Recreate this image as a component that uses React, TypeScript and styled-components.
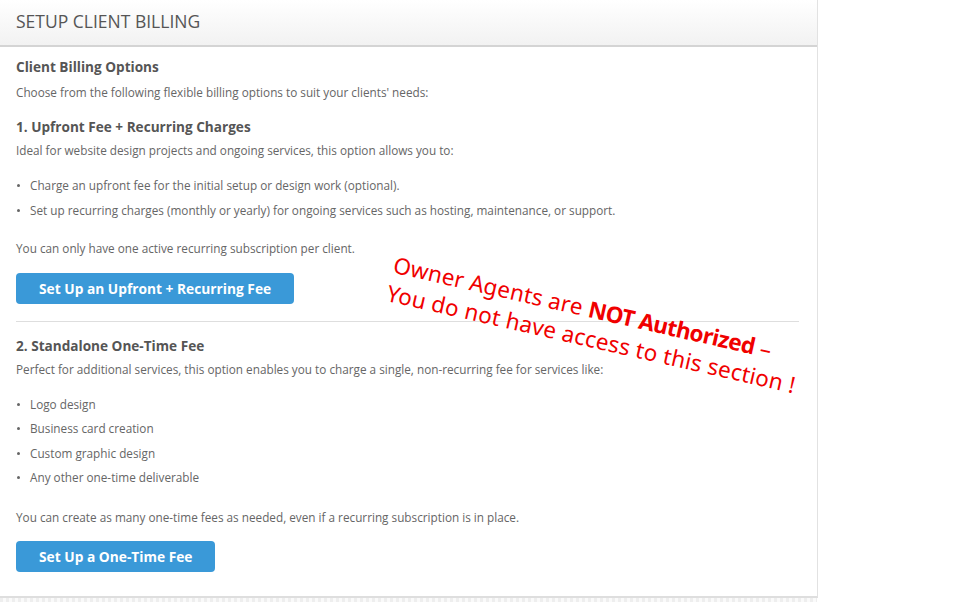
import styled, { createGlobalStyle } from 'styled-components';

const GlobalStyle = createGlobalStyle`
  html, body {
    margin: 0;
    padding: 0;
    background: #ffffff;
  }
  body {
    font-family: 'Open Sans', 'Liberation Sans', sans-serif;
    color: #666;
  }
`;

const Page = styled.div`
  position: relative;
  width: 960px;
  height: 604px;
  overflow: hidden;
`;

const Panel = styled.section`
  width: 817px;
  border-right: 1px solid #e2e2e2;
  border-bottom: 2px solid #dedede;
  background: #fff;
`;

const PanelHeader = styled.header`
  height: 47px;
  display: flex;
  align-items: center;
  padding: 0 16px 4px 16px;
  background: linear-gradient(to bottom, #ffffff 0%, #f2f2f2 100%);
  border-bottom: 2px solid #d4d4d4;
  box-sizing: border-box;
`;

const PanelTitle = styled.h1`
  margin: 0;
  font-size: 17.5px;
  font-weight: 400;
  color: #555;
`;

const PanelBody = styled.div`
  padding: 10px 16px 24px 16px;
`;

const Heading = styled.h2<{ $top?: number }>`
  margin: ${({ $top }) => $top ?? 0}px 0 0 0;
  font-size: 13.6px;
  font-weight: 700;
  color: #555;
  line-height: 20px;
`;

const Text = styled.p<{ $top?: number }>`
  margin: ${({ $top }) => $top ?? 4}px 0 0 0;
  font-size: 11.75px;
  line-height: 18px;
  color: #666;
`;

const List = styled.ul`
  margin: 17px 0 0 0;
  padding: 0 0 0 14px;
  list-style: none;
  display: flex;
  flex-direction: column;
  gap: 6.5px;
`;

const Item = styled.li`
  position: relative;
  font-size: 11.75px;
  line-height: 18px;
  color: #666;

  &::before {
    content: '';
    position: absolute;
    left: -13px;
    top: 8px;
    width: 3px;
    height: 3px;
    border-radius: 50%;
    background: #666;
  }
`;

const Button = styled.button<{ $top?: number }>`
  margin-top: ${({ $top }) => $top ?? 16}px;
  height: 31px;
  padding: 0 23px;
  border: none;
  border-radius: 4px;
  background: #3a99d8;
  color: #fff;
  font-family: 'Open Sans', 'Liberation Sans', sans-serif;
  font-size: 13.75px;
  font-weight: 700;
  cursor: pointer;
`;

const Divider = styled.hr`
  margin: 17px 0 14px 0;
  border: none;
  border-top: 1px solid #dedede;
  width: 783px;
`;

const Section = styled.div`
  display: flex;
  flex-direction: column;
  align-items: flex-start;
`;

const Notice = styled.div`
  position: absolute;
  left: 397px;
  top: 250px;
  transform: rotate(12.8deg);
  transform-origin: left top;
  color: #f00000;
  font-family: 'Noto Sans', 'Liberation Sans', sans-serif;
  font-size: 22.5px;
  line-height: 29px;
  letter-spacing: 0.2px;
  white-space: nowrap;
  pointer-events: none;

  strong {
    font-weight: 700;
    letter-spacing: -0.6px;
  }
`;

const Bottom = styled.div`
  height: 4px;
  width: 817px;
  background: repeating-linear-gradient(to right, #eee 0 3px, #fafafa 3px 6px);
`;

export default function App() {
  return (
    <Page>
      <GlobalStyle />
      <Panel>
        <PanelHeader>
          <PanelTitle>SETUP CLIENT BILLING</PanelTitle>
        </PanelHeader>
        <PanelBody>
          <Section>
            <Heading>Client Billing Options</Heading>
            <Text $top={6}>Choose from the following flexible billing options to suit your clients' needs:</Text>
            <Heading $top={16}>1. Upfront Fee + Recurring Charges</Heading>
            <Text>Ideal for website design projects and ongoing services, this option allows you to:</Text>
            <List>
              <Item>Charge an upfront fee for the initial setup or design work (optional).</Item>
              <Item>Set up recurring charges (monthly or yearly) for ongoing services such as hosting, maintenance, or support.</Item>
            </List>
            <Text $top={20}>You can only have one active recurring subscription per client.</Text>
            <Button>Set Up an Upfront + Recurring Fee</Button>
          </Section>
          <Divider />
          <Section>
            <Heading>2. Standalone One-Time Fee</Heading>
            <Text>Perfect for additional services, this option enables you to charge a single, non-recurring fee for services like:</Text>
            <List>
              <Item>Logo design</Item>
              <Item>Business card creation</Item>
              <Item>Custom graphic design</Item>
              <Item>Any other one-time deliverable</Item>
            </List>
            <Text $top={22}>You can create as many one-time fees as needed, even if a recurring subscription is in place.</Text>
            <Button $top={15}>Set Up a One-Time Fee</Button>
          </Section>
        </PanelBody>
      </Panel>
      <Bottom />
      <Notice>
        Owner Agents are <strong>NOT Authorized</strong> –
        <br />
        You do not have access to this section !
      </Notice>
    </Page>
  );
}
